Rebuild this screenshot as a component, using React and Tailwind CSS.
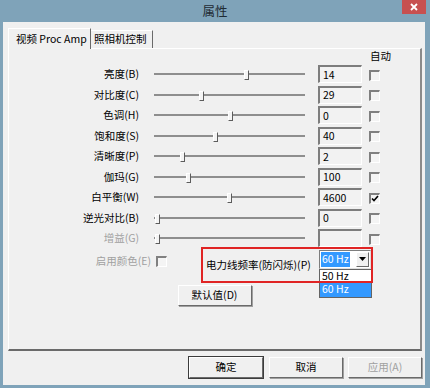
import React from "react";

const rows = [
  { label: "亮度(B)", value: "14", pos: 92 },
  { label: "对比度(C)", value: "29", pos: 47 },
  { label: "色调(H)", value: "0", pos: 76 },
  { label: "饱和度(S)", value: "40", pos: 61 },
  { label: "清晰度(P)", value: "2", pos: 28 },
  { label: "伽玛(G)", value: "100", pos: 34 },
  { label: "白平衡(W)", value: "4600", pos: 75, checked: true },
  { label: "逆光对比(B)", value: "0", pos: 3 },
  { label: "增益(G)", value: "", pos: 3, disabled: true },
];

function Slider({ pos }) {
  return (
    <div className="relative w-[151px] h-full">
      <div className="absolute left-0 right-0 top-1/2 -mt-[1px] h-[2px] bg-[#8e8e8e]" />
      <div
        className="absolute top-1/2 -mt-[4px] h-[10px] w-[5px] bg-[#f4f4f4] border border-t-white border-l-white border-r-[#5c5c5c] border-b-[#5c5c5c]"
        style={{ left: pos - 2 }}
      />
    </div>
  );
}

function CheckBox({ checked }) {
  return (
    <div className="w-[11px] h-[11px] mt-[2px] bg-[#f4f4f4] border-t-2 border-l-2 border-r border-b border-t-[#808080] border-l-[#808080] border-r-white border-b-white flex items-center justify-center">
      {checked && (
        <svg width="8" height="7" viewBox="0 0 8 7">
          <path d="M1 3.5 L3 5.5 L7 1" stroke="#000" strokeWidth="1.6" fill="none" />
        </svg>
      )}
    </div>
  );
}

function Button({ children, primary, disabled, className = "" }) {
  return (
    <div
      className={
        "h-[21px] w-[74px] flex items-center justify-center bg-[#f0f0f0] border border-t-white border-l-white border-r-[#6a6a6a] border-b-[#6a6a6a] shadow-[1px_1px_0_#a0a0a0] " +
        (primary ? "outline outline-1 outline-[#3c3c3c] " : "") +
        (disabled ? "text-[#a0a0a0] " : "text-black ") +
        className
      }
    >
      {children}
    </div>
  );
}

export default function App() {
  return (
    <div className="w-[430px] h-[388px] bg-[#7fa3b9] flex flex-col font-['Noto_Sans_CJK_SC','Noto_Sans',sans-serif] text-[10.5px] text-black leading-none">
      <div className="relative h-[22px] flex items-center justify-center text-[12.5px] text-[#1e2a33]">
        属性
        <div className="absolute right-[4px] top-0 w-[24px] h-[14px] bg-[#c75050] flex items-center justify-center">
          <svg width="8" height="8" viewBox="0 0 8 8">
            <path d="M1 1 L7 7 M7 1 L1 7" stroke="#fff" strokeWidth="1.8" />
          </svg>
        </div>
      </div>

      <div className="ml-[3px] w-[422px] h-[363px] bg-[#f0f0f0] flex flex-col pl-[5px] pr-[3px]">
        {/* tabs */}
        <div className="flex items-end h-[26px] pt-[5px]">
          <div className="h-[21px] w-[83px] pl-[7px] flex items-center bg-[#f0f0f0] border-l border-t border-l-white border-t-white border-r border-r-[#6a6a6a] relative z-10 -mb-[1px]">
            视频 Proc Amp
          </div>
          <div className="h-[18px] w-[62px] pl-[3px] flex items-center border-t border-t-white border-r border-r-[#6a6a6a]">
            照相机控制
          </div>
        </div>

        {/* panel */}
        <div className="w-[414px] h-[303px] border-t border-l border-t-white border-l-white border-r-2 border-b-2 border-r-[#8a8a8a] border-b-[#6a6a6a] flex flex-col">
          <div className="h-[15px] flex items-center pl-[361px]">自动</div>

          {rows.map((r) => (
            <div key={r.label} className="h-[20.5px] flex items-center">
              <div className={"w-[130px] text-right " + (r.disabled ? "text-[#a0a0a0]" : "")}>{r.label}</div>
              <div className="ml-[15px] h-full">
                <Slider pos={r.pos} />
              </div>
              <div className="ml-[13px] w-[44px] h-[18px] flex items-center pl-[3px] bg-[#f2f2f2] border-t-2 border-l-2 border-r border-b border-t-[#7d7d7d] border-l-[#7d7d7d] border-r-white border-b-white">
                {r.value}
              </div>
              <div className="ml-[7px]">
                <CheckBox checked={r.checked} />
              </div>
            </div>
          ))}

          <div className="flex items-start -mt-[2px]">
            <div className="w-[142px] text-right text-[#a0a0a0] mt-[9px]">启用颜色(E)</div>
            <div className="ml-[5px] mt-[7px]">
              <CheckBox />
            </div>
            <div className="relative ml-[34px] w-[172px] h-[36px] flex items-start pt-[3px] pl-[5px]">
              <div className="w-[113px] mt-[10px]">电力线频率(防闪烁)(P)</div>
              <div className="w-[52px] h-[19px] flex items-center bg-white border-t border-l border-r border-b border-t-[#7d7d7d] border-l-[#7d7d7d] border-r-[#e0e0e0] border-b-[#e0e0e0] pl-[1px]">
                <span className="bg-[#3399ff] text-white px-[1px] h-[15px] flex items-center">60 Hz</span>
                <div className="ml-auto mr-[1px] w-[13px] h-[15px] bg-[#f0f0f0] border border-t-white border-l-white border-r-[#6a6a6a] border-b-[#6a6a6a] flex items-center justify-center">
                  <svg width="7" height="4" viewBox="0 0 7 4">
                    <path d="M0 0 L7 0 L3.5 4 Z" fill="#000" />
                  </svg>
                </div>
              </div>
              <div className="absolute left-[118px] top-[22px] w-[53px] h-[29px] bg-white border border-[#646464] z-10 flex flex-col">
                <div className="h-[13px] flex items-center pl-[2px]">50 Hz</div>
                <div className="h-[14px] flex items-center pl-[2px] bg-[#3399ff] text-white">60 Hz</div>
              </div>
              <div className="absolute inset-0 border-2 border-[#e02424] z-20 pointer-events-none" />
            </div>
          </div>

          <div className="flex justify-center mt-[2px]">
            <Button className="w-[73px]">默认值(D)</Button>
          </div>
        </div>

        {/* bottom buttons */}
        <div className="flex justify-end mt-[6px] pr-0">
          <Button primary>确定</Button>
          <Button className="ml-[6px]">取消</Button>
          <Button className="ml-[5px]" disabled>
            应用(A)
          </Button>
        </div>
      </div>
    </div>
  );
}
